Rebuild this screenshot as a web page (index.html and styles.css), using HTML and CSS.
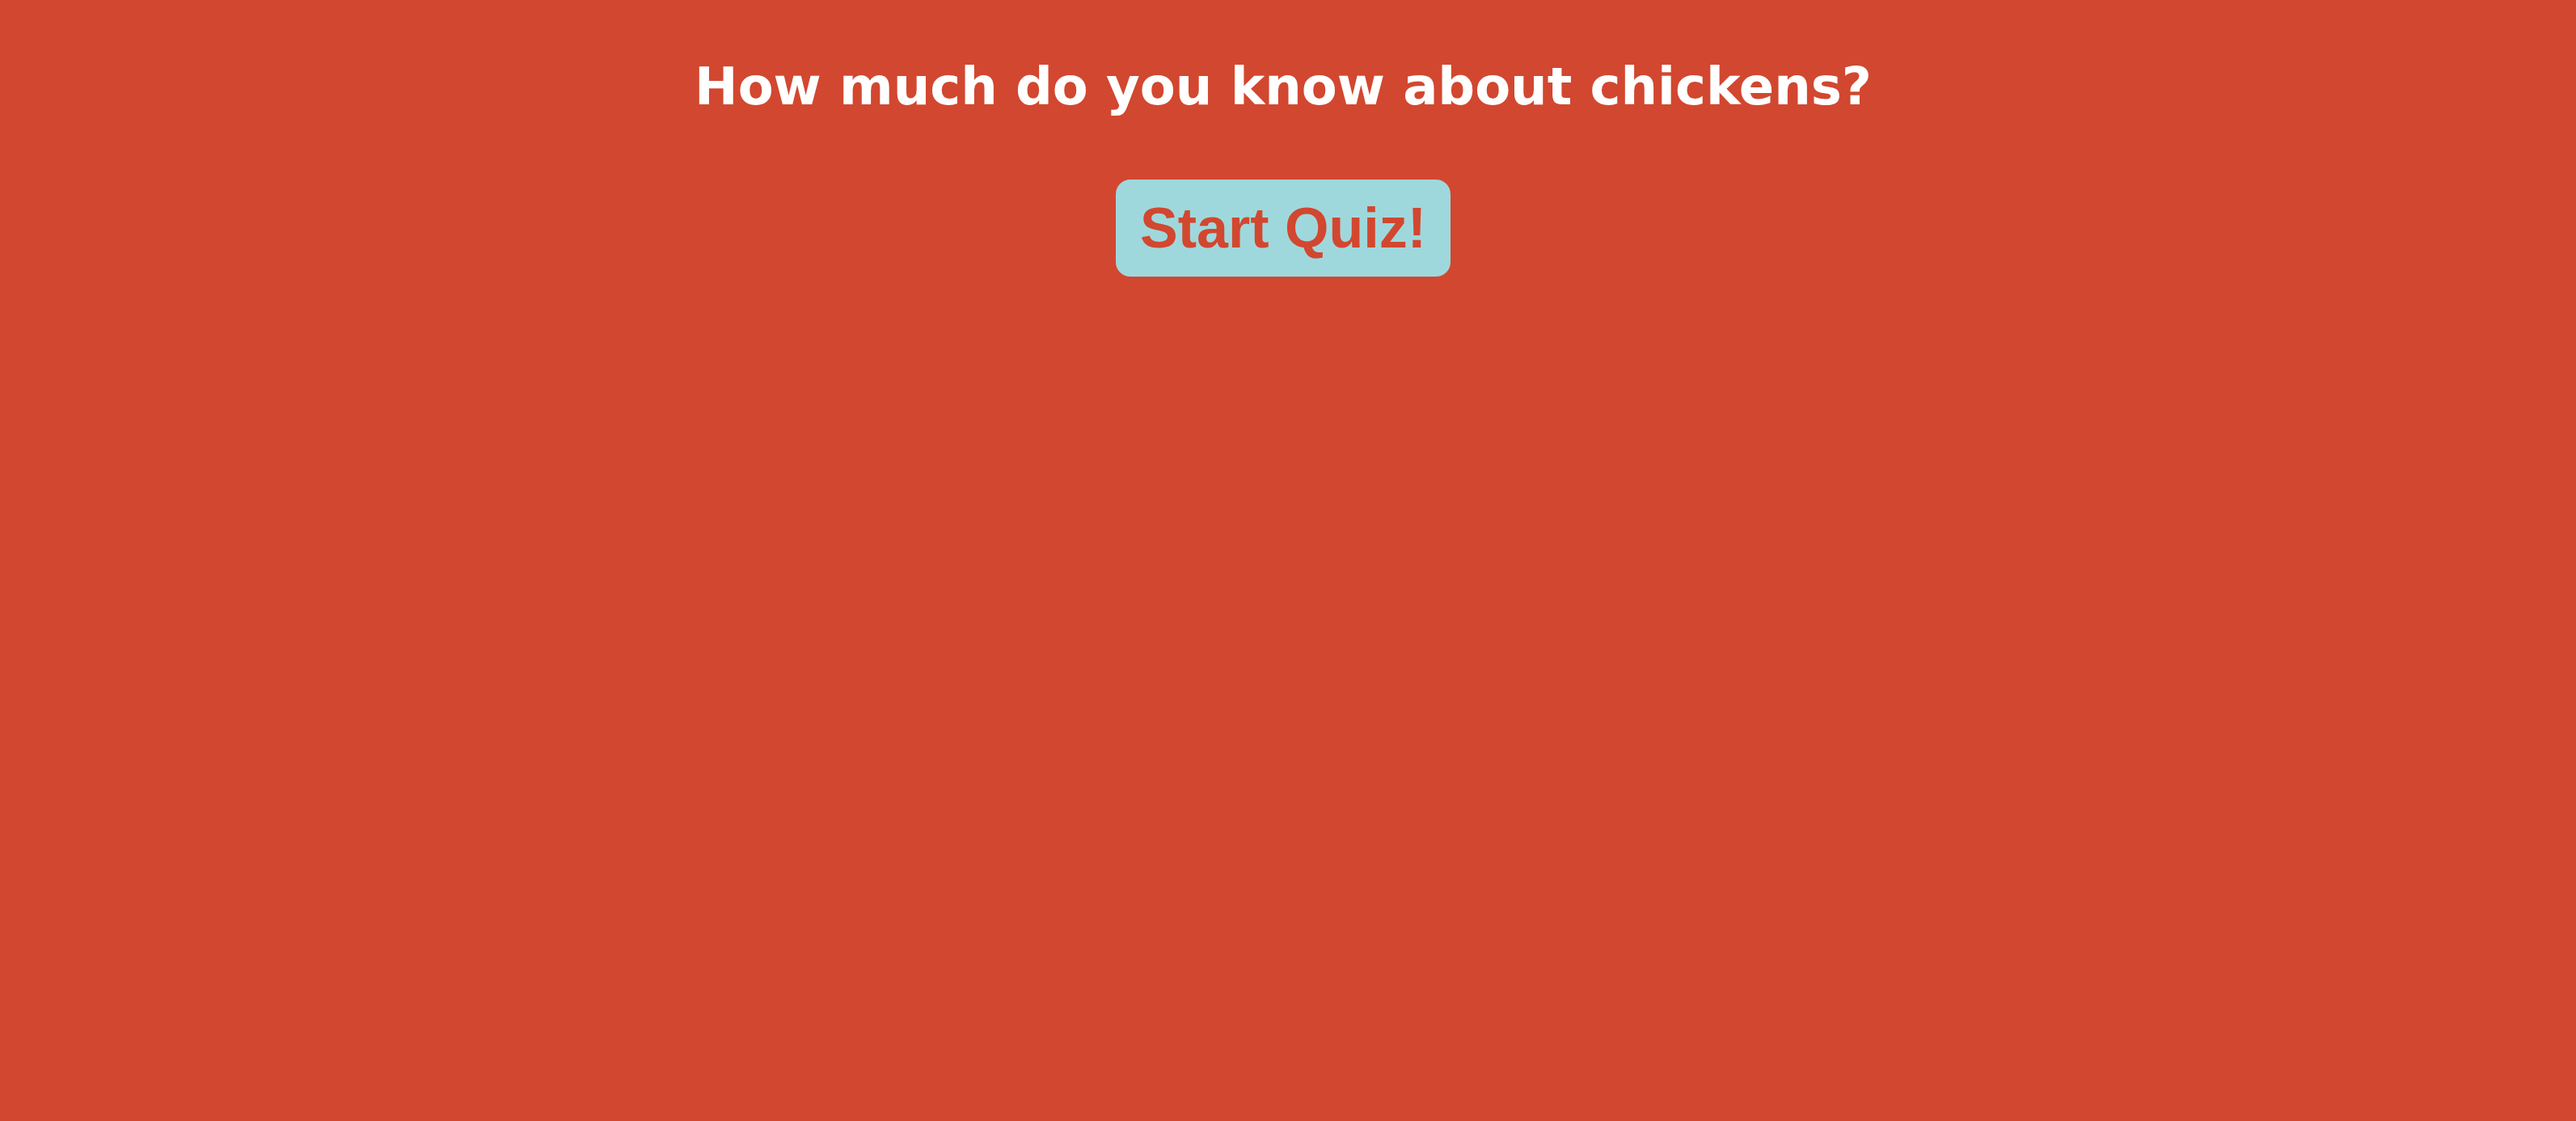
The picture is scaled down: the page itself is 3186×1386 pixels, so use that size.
FILE: index.html
```html
<!DOCTYPE html>
<html>
<head>
<meta charset="utf-8">
<link rel="stylesheet" href="styles.css">
</head>
<body>
<main class="intro">
  <h1 class="intro-title">How much do you know about chickens?</h1>
  <button class="start-btn">Start Quiz!</button>
</main>
</body>
</html>
```
FILE: styles.css
```css
html, body {
  margin: 0;
  padding: 0;
  height: 100%;
  background: #d2472f;
}
.intro {
  display: flex;
  flex-direction: column;
  align-items: center;
  padding: 70px 12px 0 0;
  gap: 77px;
}
.intro-title {
  margin: 0;
  font-family: Verdana, "DejaVu Sans", sans-serif;
  font-weight: bold;
  font-size: 64px;
  line-height: 75px;
  color: #ffffff;
}
.start-btn {
  font-family: "Liberation Sans", Arial, sans-serif;
  font-weight: bold;
  font-size: 70px;
  line-height: 80px;
  color: #d2472f;
  background: #9fd8dc;
  border: none;
  border-radius: 18px;
  padding: 20px 30px;
}
```
